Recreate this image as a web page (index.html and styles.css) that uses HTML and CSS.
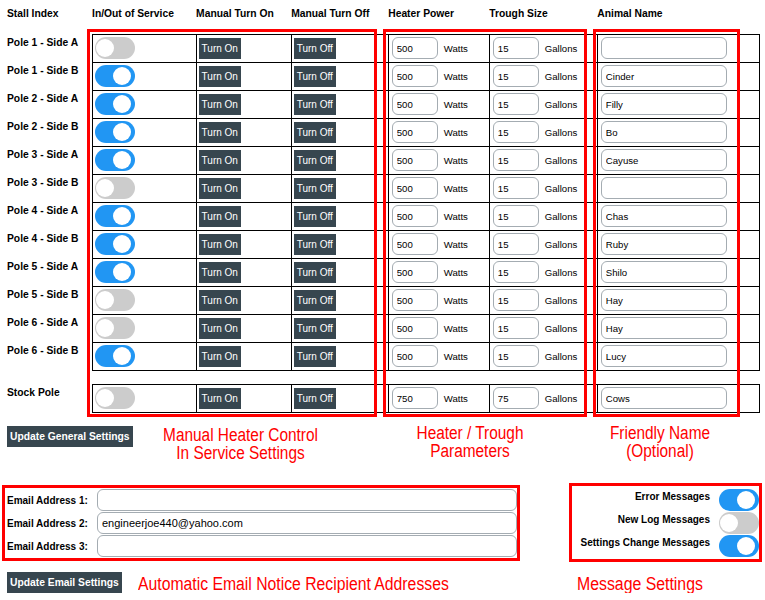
FILE: index.html
```html
<!DOCTYPE html>
<html>
<head>
<meta charset="utf-8">
<title>Stall Heater Settings</title>
<link rel="stylesheet" href="styles.css">
</head>
<body>
<div class="stall-wrap">
<table class="stalls">
<colgroup><col class="c-label"><col class="c-svc"><col class="c-on"><col class="c-off"><col class="c-pow"><col class="c-trough"><col class="c-name"></colgroup>
<thead>
<tr><th class="lbl">Stall Index</th><th>In/Out of Service</th><th>Manual Turn On</th><th>Manual Turn Off</th><th>Heater Power</th><th>Trough Size</th><th>Animal Name</th></tr>
</thead>
<tbody>
<tr><td class="lbl">Pole 1 - Side A</td><td><label class="switch"><input type="checkbox"><span class="slider"></span></label></td><td><button class="btn">Turn On</button></td><td><button class="btn">Turn Off</button></td><td><input class="field num" value="500"><span class="unit">Watts</span></td><td><input class="field num" value="15"><span class="unit">Gallons</span></td><td><input class="field name" value=""></td></tr>
<tr><td class="lbl">Pole 1 - Side B</td><td><label class="switch"><input type="checkbox" checked><span class="slider"></span></label></td><td><button class="btn">Turn On</button></td><td><button class="btn">Turn Off</button></td><td><input class="field num" value="500"><span class="unit">Watts</span></td><td><input class="field num" value="15"><span class="unit">Gallons</span></td><td><input class="field name" value="Cinder"></td></tr>
<tr><td class="lbl">Pole 2 - Side A</td><td><label class="switch"><input type="checkbox" checked><span class="slider"></span></label></td><td><button class="btn">Turn On</button></td><td><button class="btn">Turn Off</button></td><td><input class="field num" value="500"><span class="unit">Watts</span></td><td><input class="field num" value="15"><span class="unit">Gallons</span></td><td><input class="field name" value="Filly"></td></tr>
<tr><td class="lbl">Pole 2 - Side B</td><td><label class="switch"><input type="checkbox" checked><span class="slider"></span></label></td><td><button class="btn">Turn On</button></td><td><button class="btn">Turn Off</button></td><td><input class="field num" value="500"><span class="unit">Watts</span></td><td><input class="field num" value="15"><span class="unit">Gallons</span></td><td><input class="field name" value="Bo"></td></tr>
<tr><td class="lbl">Pole 3 - Side A</td><td><label class="switch"><input type="checkbox" checked><span class="slider"></span></label></td><td><button class="btn">Turn On</button></td><td><button class="btn">Turn Off</button></td><td><input class="field num" value="500"><span class="unit">Watts</span></td><td><input class="field num" value="15"><span class="unit">Gallons</span></td><td><input class="field name" value="Cayuse"></td></tr>
<tr><td class="lbl">Pole 3 - Side B</td><td><label class="switch"><input type="checkbox"><span class="slider"></span></label></td><td><button class="btn">Turn On</button></td><td><button class="btn">Turn Off</button></td><td><input class="field num" value="500"><span class="unit">Watts</span></td><td><input class="field num" value="15"><span class="unit">Gallons</span></td><td><input class="field name" value=""></td></tr>
<tr><td class="lbl">Pole 4 - Side A</td><td><label class="switch"><input type="checkbox" checked><span class="slider"></span></label></td><td><button class="btn">Turn On</button></td><td><button class="btn">Turn Off</button></td><td><input class="field num" value="500"><span class="unit">Watts</span></td><td><input class="field num" value="15"><span class="unit">Gallons</span></td><td><input class="field name" value="Chas"></td></tr>
<tr><td class="lbl">Pole 4 - Side B</td><td><label class="switch"><input type="checkbox" checked><span class="slider"></span></label></td><td><button class="btn">Turn On</button></td><td><button class="btn">Turn Off</button></td><td><input class="field num" value="500"><span class="unit">Watts</span></td><td><input class="field num" value="15"><span class="unit">Gallons</span></td><td><input class="field name" value="Ruby"></td></tr>
<tr><td class="lbl">Pole 5 - Side A</td><td><label class="switch"><input type="checkbox" checked><span class="slider"></span></label></td><td><button class="btn">Turn On</button></td><td><button class="btn">Turn Off</button></td><td><input class="field num" value="500"><span class="unit">Watts</span></td><td><input class="field num" value="15"><span class="unit">Gallons</span></td><td><input class="field name" value="Shilo"></td></tr>
<tr><td class="lbl">Pole 5 - Side B</td><td><label class="switch"><input type="checkbox"><span class="slider"></span></label></td><td><button class="btn">Turn On</button></td><td><button class="btn">Turn Off</button></td><td><input class="field num" value="500"><span class="unit">Watts</span></td><td><input class="field num" value="15"><span class="unit">Gallons</span></td><td><input class="field name" value="Hay"></td></tr>
<tr><td class="lbl">Pole 6 - Side A</td><td><label class="switch"><input type="checkbox"><span class="slider"></span></label></td><td><button class="btn">Turn On</button></td><td><button class="btn">Turn Off</button></td><td><input class="field num" value="500"><span class="unit">Watts</span></td><td><input class="field num" value="15"><span class="unit">Gallons</span></td><td><input class="field name" value="Hay"></td></tr>
<tr><td class="lbl">Pole 6 - Side B</td><td><label class="switch"><input type="checkbox" checked><span class="slider"></span></label></td><td><button class="btn">Turn On</button></td><td><button class="btn">Turn Off</button></td><td><input class="field num" value="500"><span class="unit">Watts</span></td><td><input class="field num" value="15"><span class="unit">Gallons</span></td><td><input class="field name" value="Lucy"></td></tr>
<tr class="gap"><td colspan="7"></td></tr>
<tr><td class="lbl">Stock Pole</td><td><label class="switch"><input type="checkbox"><span class="slider"></span></label></td><td><button class="btn">Turn On</button></td><td><button class="btn">Turn Off</button></td><td><input class="field num" value="750"><span class="unit">Watts</span></td><td><input class="field num" value="75"><span class="unit">Gallons</span></td><td><input class="field name" value="Cows"></td></tr>
</tbody>
</table>
<div class="mark mark-control"></div>
<div class="mark mark-params"></div>
<div class="mark mark-name"></div>
</div>

<div class="legend-row">
  <div class="legend-btn"><button class="btn strong">Update General Settings</button></div>
  <div class="note note-control">Manual Heater Control<br>In Service Settings</div>
  <div class="note note-params">Heater / Trough<br>Parameters</div>
  <div class="note note-name">Friendly Name<br>(Optional)</div>
</div>

<div class="settings-row">
  <div class="email-box">
    <label class="email-label">Email Address 1:</label><input class="field email" value="">
    <label class="email-label">Email Address 2:</label><input class="field email" value="engineerjoe440@yahoo.com">
    <label class="email-label">Email Address 3:</label><input class="field email" value="">
  </div>
  <div class="msg-box">
    <span class="msg-label">Error Messages</span><label class="switch"><input type="checkbox" checked><span class="slider"></span></label>
    <span class="msg-label">New Log Messages</span><label class="switch"><input type="checkbox"><span class="slider"></span></label>
    <span class="msg-label">Settings Change Messages</span><label class="switch"><input type="checkbox" checked><span class="slider"></span></label>
  </div>
</div>

<div class="footer-row">
  <button class="btn strong">Update Email Settings</button>
  <div class="note note-email">Automatic Email Notice Recipient Addresses</div>
  <div class="note note-msg">Message Settings</div>
</div>
</body>
</html>
```

FILE: styles.css
```css
* { box-sizing: border-box; }

body {
  margin: 0;
  width: 765px;
  background: #fff;
  color: #000;
  font-family: "Liberation Sans", Arial, sans-serif;
  font-size: 10px;
  line-height: 13px;
}

.stall-wrap { position: relative; }

.stalls {
  border-collapse: collapse;
  table-layout: fixed;
  width: 760px;
}
.c-label { width: 92px; }
.c-svc { width: 104px; }
.c-on { width: 95px; }
.c-off { width: 97px; }
.c-pow { width: 101px; }
.c-trough { width: 108px; }
.c-name { width: 162px; }

.stalls th {
  text-align: left;
  font-weight: bold;
  font-size: 10.3px;
  height: 34px;
  padding: 7px 0 0 0;
  vertical-align: top;
  white-space: nowrap;
}
.stalls th.lbl { padding-left: 7px; }

.stalls td {
  border: 1px solid #000;
  height: 28px;
  padding: 0 2px;
  vertical-align: middle;
  white-space: nowrap;
}
.stalls td.lbl {
  border: none;
  font-weight: bold;
  font-size: 10.3px;
  vertical-align: top;
  padding: 2px 0 0 7px;
}
.stalls tr.gap td {
  border: none;
  height: 14px;
  padding: 0;
}

/* toggle switch */
.switch {
  position: relative;
  display: inline-block;
  width: 40px;
  height: 22px;
  vertical-align: middle;
}
.switch input { opacity: 0; width: 0; height: 0; margin: 0; }
.slider {
  position: absolute;
  inset: 0;
  background: #ccc;
  border-radius: 11px;
}
.slider::before {
  content: "";
  position: absolute;
  left: 1px;
  top: 2px;
  width: 18px;
  height: 18px;
  border-radius: 50%;
  background: #fff;
}
.switch input:checked + .slider { background: #2196f3; }
.switch input:checked + .slider::before { transform: translateX(17px); }

/* buttons */
.btn {
  display: inline-block;
  vertical-align: middle;
  height: 21px;
  padding: 0 3px;
  border: 0;
  margin: 0;
  background: #37464f;
  color: #fff;
  font: inherit;
  font-size: 10px;
  line-height: 21px;
  white-space: nowrap;
}
.btn.strong { font-weight: bold; font-size: 10.3px; padding: 0 3px; }

/* inputs */
.field {
  display: inline-block;
  vertical-align: middle;
  height: 22px;
  margin: 0;
  padding: 0 4px;
  border: 1px solid #a4acb2;
  border-radius: 6px;
  background: #fff;
  color: #000;
  font: inherit;
  font-size: 9.6px;
}
.field.num { width: 46px; margin-left: 1px; }
.field.name { width: 126px; margin-left: 1px; }
.unit { display: inline-block; vertical-align: middle; margin-left: 6px; font-size: 9.6px; }

/* annotation boxes over the table */
.mark {
  position: absolute;
  top: 29px;
  height: 388px;
  border: 3px solid #f00;
  pointer-events: none;
}
.mark-control { left: 87px; width: 290px; }
.mark-params { left: 383px; width: 204px; }
.mark-name { left: 593px; width: 147px; }

.note {
  color: #f00;
  font-family: "Liberation Sans", Arial, sans-serif;
  font-size: 18px;
  line-height: 18px;
  text-align: center;
  transform: scaleX(0.855);
  white-space: nowrap;
}

.legend-row {
  display: flex;
  align-items: flex-start;
  margin-top: 11px;
}
.legend-btn { width: 133px; padding: 2px 0 0 7px; }
.note-control { width: 215px; margin-top: 2px; }
.note-params { width: 244px; }
.note-name { width: 136px; }

.settings-row {
  display: flex;
  align-items: flex-start;
  gap: 49px;
  margin: 21px 0 0 2px;
}
.email-box {
  margin-top: 2px;
  width: 518px;
  border: 3px solid #f00;
  padding: 1px 0 1px 2px;
  display: grid;
  grid-template-columns: 90px 420px;
  row-gap: 1px;
  align-items: start;
}
.email-label { font-weight: bold; white-space: nowrap; padding-top: 5px; }
.field.email { width: 420px; font-size: 11px; }

.msg-box {
  width: 193px;
  border: 3px solid #f00;
  padding: 3px 0 2px 0;
  display: grid;
  grid-template-columns: 1fr 40px;
  column-gap: 9px;
  row-gap: 1px;
  align-items: start;
}
.msg-label { font-weight: bold; text-align: right; white-space: nowrap; padding-top: 1px; }

.footer-row {
  display: flex;
  align-items: flex-start;
  margin-top: 10px;
  padding-left: 7px;
}
.note-email { width: 439px; margin-left: 16px; margin-top: 3px; text-align: left; transform: scaleX(0.875); transform-origin: left center; }
.note-msg { margin-top: 3px; text-align: left; transform: scaleX(0.88); transform-origin: left center; }
```
